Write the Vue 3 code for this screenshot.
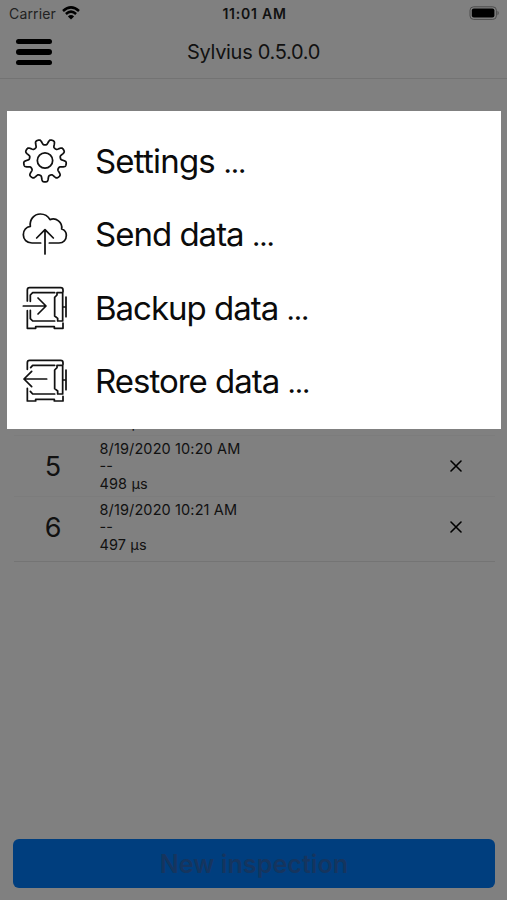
<script setup>
const rows = [
  { n: 5, date: '8/19/2020 10:20 AM', value: '498 µs' },
  { n: 6, date: '8/19/2020 10:21 AM', value: '497 µs' },
]

// Outline of a nine-toothed gear with rounded teeth, one tooth pointing down.
function gearPath(cx, cy) {
  const points = []
  for (let i = 0; i < 360; i++) {
    const a = (i * Math.PI) / 180
    const r = 55.5 + 8.8 * Math.tanh(2 * Math.cos(9 * a)) / Math.tanh(2)
    points.push((cx + r * Math.sin(a)).toFixed(1) + ' ' + (cy + r * Math.cos(a)).toFixed(1))
  }
  return 'M' + points.join('L') + 'Z'
}
const gear = gearPath(105, 91)

const items = [
  {
    key: 'settings', label: 'Settings', box: '36 23.5 138 138',
    paths: [gear, 'M128 91a23 23 0 1 1-46 0a23 23 0 1 1 46 0Z'],
  },
  {
    key: 'send', label: 'Send data', box: '36 34 138 138',
    paths: [
      'M92 130H66C50 130 40 119 40 105C40 92 49 82 61 80C58 60 72 43 91 43C104 43 114 49 120 60C138 53 158 67 155 88C164 91 169 98 169 107C169 121 160 130 147 130H118',
      'M105 163V91M80 115L105 90L130 115',
    ],
  },
  {
    key: 'backup', label: 'Backup data', box: '36 29 138 138',
    paths: [
      'M52 77V44Q52 37 59 37H152Q159 37 159 44V49M52 106V159H77V154H133V159H159V143',
      'M61 78V59L68 52H134M61 105V130L68 137H134',
      'M141 52H158V137H143V129L134 122V66L141 59ZM168 65V124M159 95H168',
      'M40 92H107M84 68L108 92L84 116',
    ],
  },
  {
    key: 'restore', label: 'Restore data', box: '36 30 138 138',
    paths: [
      'M52 64V44Q52 37 59 37H152Q159 37 159 44V49M52 121V159H77V154H133V159H159V145',
      'M62 59L68 52H134M61 130L68 138H134',
      'M141 52H158V138H143V129L134 122V66L141 59ZM168 66V125M159 96H168',
      'M110 93H42M65 70L42 93L65 116',
    ],
  },
]
</script>

<template>
  <div class="screen">
    <header class="status">
      <div class="carrier">
        <span class="carrier-name">Carrier</span>
        <svg class="wifi" viewBox="0 0 18 14">
          <path d="M1 5Q9-2.2 17 5M3.9 8Q9 3.3 14.1 8" />
          <path class="dot" d="M9 13.5L5.9 10.4Q9 7.8 12.1 10.4Z" />
        </svg>
      </div>
      <span class="time">11:01 AM</span>
      <svg class="battery" viewBox="0 0 31 14">
        <rect class="case" x="1" y=".8" width="26.4" height="12.6" rx="3.6" />
        <rect x="2.8" y="2.5" width="22.6" height="9" rx="2" />
        <path class="tip" d="M28.5 4.8Q31 7 28.5 9.4Z" />
      </svg>
    </header>
    <nav class="navbar">
      <div class="burger"><i></i><i></i><i></i></div>
      <h1 class="title">Sylvius 0.5.0.0</h1>
    </nav>
    <main class="list">
      <div class="row first">
        <div class="details"><span>498 µs</span></div>
      </div>
      <div v-for="row in rows" :key="row.n" class="row">
        <span class="number">{{ row.n }}</span>
        <div class="details">
          <span class="date">{{ row.date }}</span>
          <span>--</span>
          <span>{{ row.value }}</span>
        </div>
        <svg class="close" viewBox="0 0 12 12"><path d="M1 1L11 11M11 1L1 11" /></svg>
      </div>
    </main>
    <footer class="footer"><button class="new">New inspection</button></footer>
    <div class="menu">
      <div v-for="item in items" :key="item.key" class="item">
        <svg class="icon" :viewBox="item.box"><path v-for="d in item.paths" :key="d" :d="d" /></svg>
        <span :class="['label', item.key]">{{ item.label }} <span class="dots">...</span></span>
      </div>
    </div>
  </div>
</template>

<style>
body { margin: 0; background: #808080; }
</style>

<style scoped>
.screen {
  position: relative;
  display: flex;
  flex-direction: column;
  width: 507px;
  height: 900px;
  overflow: hidden;
  background: #808080;
  color: #111;
  font-family: Inter, "Liberation Sans", sans-serif;
}
.status {
  display: grid;
  grid-template-columns: 1fr auto 1fr;
  align-items: center;
  box-sizing: border-box;
  height: 27px;
  padding: 0 7px 0 9px;
  font-size: 14px;
}
.carrier { display: flex; align-items: center; gap: 6px; }
.carrier-name { letter-spacing: .15px; color: #222; }
.wifi { width: 18px; height: 14px; margin-top: -2px; fill: none; stroke: #000; stroke-width: 2.5; }
.wifi .dot { fill: #000; stroke: none; }
.time { font-weight: 600; font-size: 14px; letter-spacing: .75px; }
.battery { width: 31px; height: 14px; margin-top: -1px; justify-self: end; }
.battery .case { fill: none; stroke: #4c4c4c; stroke-width: 1; }
.battery .tip { fill: #4c4c4c; }
.navbar {
  display: grid;
  grid-template-columns: 53px 1fr 53px;
  align-items: center;
  box-sizing: border-box;
  height: 52px;
  border-bottom: 1px solid #737373;
}
.burger { display: flex; flex-direction: column; gap: 5px; padding: 0 1px 1px 15.5px; }
.burger i { height: 5.5px; border-radius: 3px; background: #000; }
.title {
  margin: 0 0 1px;
  text-align: center;
  font-size: 20px;
  font-weight: 400;
  letter-spacing: -.3px;
}
.list { flex: 1; padding: 333px 12px 0 14px; }
.row {
  display: grid;
  grid-template-columns: 78px 1fr 76px;
  align-items: center;
  box-sizing: border-box;
  height: 61px;
  padding-left: 8px;
  border-bottom: 1px solid #7c7c7c;
}
.row.first {
  grid-template-columns: 1fr;
  height: 24px;
  padding: 0 0 2px 86px;
}
.row:last-child { height: 65px; padding-bottom: 4px; border-color: #747474; }
.number { width: 62px; text-align: center; font-size: 27px; }
.details {
  display: flex;
  flex-direction: column;
  margin-left: -.5px;
  font-size: 14.5px;
  line-height: 17.5px;
  letter-spacing: .12px;
}
.close { width: 12px; height: 12px; margin-left: 31px; fill: none; stroke: #000; stroke-width: 1.6; stroke-linecap: round; }
.footer { padding: 0 12px 12px 13px; }
.new {
  display: block;
  width: 100%;
  height: 49px;
  padding: 0;
  border: 0;
  border-radius: 6px;
  background: #003e7e;
  color: #15355f;
  font: 600 25px Inter, "Liberation Sans", sans-serif;
  letter-spacing: .1px;
}
.menu {
  position: absolute;
  left: 7px;
  top: 111px;
  box-sizing: border-box;
  width: 494px;
  height: 317.5px;
  padding: 13.3px 15px;
  background: #fff;
}
.item { display: flex; align-items: center; height: 73.33px; gap: 27px; }
.icon {
  flex: none;
  width: 46px;
  height: 46px;
  fill: none;
  stroke: #111;
  stroke-width: 5.2;
  stroke-linecap: round;
  stroke-linejoin: round;
}
.label { font-size: 33px; line-height: 40px; white-space: nowrap; color: #0b0b0b; letter-spacing: -1px; }
.label.settings { letter-spacing: -.8px; }
.label .dots { font-size: 29px; line-height: 0; letter-spacing: -1.1px; }
</style>
